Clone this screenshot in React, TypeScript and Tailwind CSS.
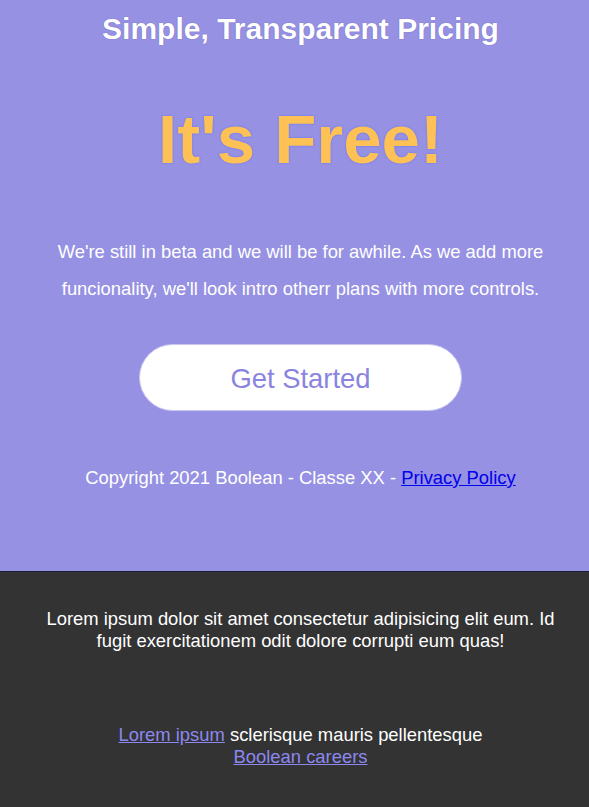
import React from "react";

export default function App() {
  return (
    <div className="w-full font-['Liberation_Sans',Arial,sans-serif]">
      <section className="h-[572px] bg-[#9691e3] border-b border-[#1f1d3d] pl-[12px] flex flex-col items-center text-center">
        <h1 className="pt-[12px] text-[30px] leading-[34px] font-bold text-white [text-shadow:0_0_1px_rgba(60,50,140,0.6)]">
          Simple, Transparent Pricing
        </h1>
        <h2 className="mt-[54px] text-[69px] leading-[80px] font-bold text-[#fec156] [text-shadow:0_0_2px_#5a6cff]">
          It's Free!
        </h2>
        <p className="mt-[53px] text-[18.4px] leading-[37px] text-white">
          We're still in beta and we will be for awhile. As we add more
          <br />
          funcionality, we'll look intro otherr plans with more controls.
        </p>
        <button className="mt-[37px] w-[323px] h-[67px] rounded-full bg-white border border-[#c9c6f2] text-[27.4px] leading-[36px] pt-[2px] text-[#8a84e0]">
          Get Started
        </button>
        <p className="mt-[55px] text-[18.4px] leading-[24px] text-white">
          Copyright 2021 Boolean - Classe XX -{" "}
          <a href="#" className="text-[#0000ee] underline">
            Privacy Policy
          </a>
        </p>
      </section>
      <footer className="bg-[#333333] text-white text-center pl-[12px] pt-[36px] pb-[40px]">
        <p className="text-[18.4px] leading-[22px]">
          Lorem ipsum dolor sit amet consectetur adipisicing elit eum. Id
          <br />
          fugit exercitationem odit dolore corrupti eum quas!
        </p>
        <div className="mt-[72px] text-[18.4px] leading-[22px]">
          <a href="#" className="text-[#8c88f0] underline">
            Lorem ipsum
          </a>{" "}
          sclerisque mauris pellentesque
          <br />
          <a href="#" className="text-[#8c88f0] underline">
            Boolean careers
          </a>
        </div>
      </footer>
    </div>
  );
}
